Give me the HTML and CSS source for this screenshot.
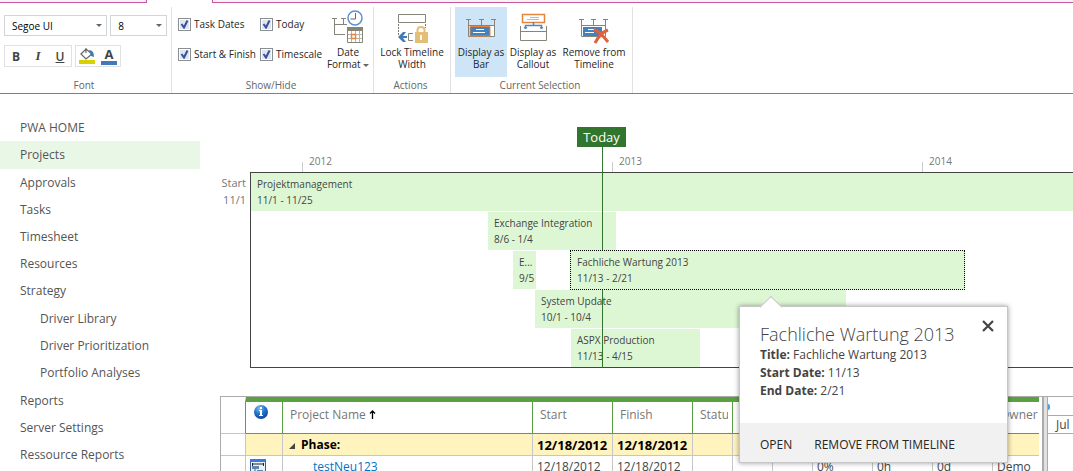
FILE: index.html
```html
<!DOCTYPE html>
<html lang="en">
<head>
<meta charset="utf-8">
<title>Project Center</title>
<link rel="stylesheet" href="styles.css">
</head>
<body>
<header>
  <div class="tabs"><span class="tab-before"></span><span class="tab-open"></span><span class="tab-after"></span></div>
  <div class="ribbon">
    <section class="group group-font">
      <div class="group-body font-tools">
        <div class="tool-row">
          <label class="combo combo-font"><select aria-label="Font"><option>Segoe UI</option></select></label>
          <label class="combo combo-size"><select aria-label="Font size"><option>8</option></select></label>
        </div>
        <div class="tool-row">
          <div class="button-set">
            <button class="tool bold">B</button><button class="tool italic">I</button><button class="tool underline">U</button>
          </div>
          <div class="button-set">
            <button class="tool" aria-label="Fill color"><svg width="18" height="18" viewBox="0 0 18 18"><path d="M3 7l5-5 6 5-6 5zM8 1v5" fill="#fff" stroke="#666" stroke-width="1.2"/><path d="M11 3q5 0 5 7l-3-1-1-3z" fill="#3c7fb5"/><path d="M1 13h16v4H1z" fill="#d8d000"/></svg></button>
            <button class="tool" aria-label="Font color"><span class="font-color">A</span></button>
          </div>
        </div>
      </div>
      <h2>Font</h2>
    </section>
    <section class="group group-show">
      <div class="group-body">
        <div class="checks">
          <label><input type="checkbox" checked>Task Dates</label>
          <label><input type="checkbox" checked>Today</label>
          <label><input type="checkbox" checked>Start &amp; Finish</label>
          <label><input type="checkbox" checked>Timescale</label>
        </div>
        <button class="big date-format">
          <svg width="34" height="34" viewBox="0 0 34 34" fill="none"><path d="M1 8.500h5M10 8.500h5M3.500 8v17M12.500 8v7M3 14.500h13M3 24.500h11" stroke="#85857a"/><circle cx="24" cy="8" r="7" fill="#fff" stroke="#5b93cf" stroke-width="1.500"/><path d="M24.500 3v6h-5" stroke="#666"/><path d="M16.500 18.500h15v14h-15z" fill="#fff" stroke="#85857a"/><path d="M16 17h16v4H16z" fill="#85857a"/><path d="M17 24.500h14M17 28.500h14M20.500 21v11M24.500 21v11M28.500 21v11" stroke="#b5b5ae"/><path d="M20.500 24.500h4v4h-4z" stroke="#e8843c" stroke-width="1.500"/></svg>
          <span>Date<br>Format <i class="caret"></i></span>
        </button>
      </div>
      <h2>Show/Hide</h2>
    </section>
    <section class="group group-actions">
      <div class="group-body">
        <button class="big">
          <svg width="34" height="34" viewBox="0 0 34 34" fill="none"><path d="M3.500 4.500h27v8h-27z" stroke="#85857a"/><path d="M3.500 14v11M30.500 14v4" stroke="#777" stroke-dasharray="2 1"/><path d="M3 27l5-5h3l-3 4h4v2H8l3 4H8z" fill="#3f7cba"/><path d="M18 23.500h-4.500v7H18" stroke="#85857a"/><path d="M22.500 23v-3q0-3 3.500-3t3.500 3v3" stroke="#e5bd76" stroke-width="2"/><path d="M20 22h13v11H20z" fill="#e5bd76"/><path d="M25 25h2v5h-2z" fill="#fff"/></svg>
          <span>Lock Timeline<br>Width</span>
        </button>
      </div>
      <h2>Actions</h2>
    </section>
    <section class="group group-selection">
      <div class="group-body">
        <button class="big selected">
          <svg width="34" height="34" viewBox="0 0 34 34" fill="none"><path d="M4.500 15.500h26v11h-26z" fill="#fff"/><path d="M2 9.500h5M15 9.500h5M27 9.500h5M4.500 9v17.500h26V9M17.500 9v7M4 15.500h27" stroke="#85857a"/><path d="M6 16.500h20v9.500H6z" fill="#4581bd" stroke="#e8843c"/><path d="M12 19.500h8M9 22.500h12" stroke="#fff"/></svg>
          <span>Display as<br>Bar</span>
        </button>
        <button class="big">
          <svg width="34" height="34" viewBox="0 0 34 34" fill="none"><path d="M6.500 4.500h22v8h-22z" stroke="#e8843c" stroke-width="1.500"/><path d="M14 7.500h9M11 9.500h12" stroke="#bbb"/><path d="M17.500 12v3M9.500 19v-3.500h16V19" stroke="#4c88c4" stroke-width="1.500"/><path d="M8 17l1.500 2 1.500-2M24 17l1.500 2 1.500-2" stroke="#4c88c4"/><path d="M4.500 16v14.500h26V16M5 21.500h25" stroke="#85857a"/></svg>
          <span>Display as<br>Callout</span>
        </button>
        <button class="big">
          <svg width="34" height="34" viewBox="0 0 34 34" fill="none"><path d="M2 9.500h5M14 9.500h5M26 9.500h5M4.500 9v17.500h24V9M16.500 9v7M4 15.500h24" stroke="#85857a"/><path d="M6 17h19v9H6z" fill="#4581bd"/><path d="M11 19.500h7M8 22.500h9" stroke="#fff"/><path d="M17 19q8 5 14 13M31 20q-8 3-13 13" stroke="#e2603c" stroke-width="3"/></svg>
          <span>Remove from<br>Timeline</span>
        </button>
      </div>
      <h2>Current Selection</h2>
    </section>
  </div>
</header>
<div class="page">
  <nav>
    <ul>
      <li><a href="#">PWA HOME</a></li>
      <li><a href="#" class="current">Projects</a></li>
      <li><a href="#">Approvals</a></li>
      <li><a href="#">Tasks</a></li>
      <li><a href="#">Timesheet</a></li>
      <li><a href="#">Resources</a></li>
      <li><a href="#">Strategy</a>
        <ul>
          <li><a href="#">Driver Library</a></li>
          <li><a href="#">Driver Prioritization</a></li>
          <li><a href="#">Portfolio Analyses</a></li>
        </ul>
      </li>
      <li><a href="#">Reports</a></li>
      <li><a href="#">Server Settings</a></li>
      <li><a href="#">Ressource Reports</a></li>
    </ul>
  </nav>
  <main>
    <section class="timeline">
      <div class="timeline-start">Start<br>11/1</div>
      <div class="timeline-body">
        <div class="years"><span>2012</span><span>2013</span><span>2014</span></div>
        <div class="today"><b>Today</b></div>
        <div class="bars">
          <div class="bar-row"><div class="bar bar-open">Projektmanagement<br>11/1 - 11/25</div></div>
          <div class="bar-row"><div class="bar" style="margin-left:237px;width:128px">Exchange Integration<br>8/6 - 1/4</div></div>
          <div class="bar-row"><div class="bar" style="margin-left:262px;width:23px">E...<br>9/5</div><div class="bar picked" style="margin-left:34px;width:395px">Fachliche Wartung 2013<br>11/13 - 2/21</div></div>
          <div class="bar-row"><div class="bar" style="margin-left:284px;width:311px">System Update<br>10/1 - 10/4</div></div>
          <div class="bar-row"><div class="bar" style="margin-left:320px;width:129px">ASPX Production<br>11/13 - 4/15</div></div>
        </div>
        <aside class="callout">
          <div class="callout-body">
            <button class="close" aria-label="Close"><svg width="12" height="12" viewBox="0 0 12 12"><path d="M1 1l10 10M11 1L1 11" stroke="#444" stroke-width="2.200"/></svg></button>
            <h3>Fachliche Wartung 2013</h3>
            <p><b>Title:</b> Fachliche Wartung 2013</p>
            <p><b>Start Date:</b> 11/13</p>
            <p><b>End Date:</b> 2/21</p>
          </div>
          <div class="callout-foot"><a href="#">OPEN</a><a href="#">REMOVE FROM TIMELINE</a></div>
        </aside>
      </div>
    </section>
    <section class="grid">
      <div class="sheet">
        <table>
          <colgroup><col class="w-row"><col class="w-info"><col><col class="w-date"><col class="w-date"><col class="w-small"><col class="w-small"><col class="w-small"><col class="w-mid"><col class="w-mid"><col class="w-mid"><col class="w-owner"></colgroup>
          <thead>
            <tr>
              <th class="row-head"></th>
              <th class="info"><svg width="16" height="16" viewBox="0 0 16 16"><defs><radialGradient id="ball" cx=".4" cy=".25" r=".8"><stop offset="0" stop-color="#7fc0f5"/><stop offset=".5" stop-color="#2374c8"/><stop offset="1" stop-color="#123f94"/></radialGradient></defs><circle cx="8" cy="8" r="7" fill="url(#ball)"/><path d="M7 3h2v2H7zM6 6h3v5h1v1H6v-1h1V7H6z" fill="#fff"/></svg></th>
              <th>Project Name <svg class="sort" width="7" height="9" viewBox="0 0 7 9"><path d="M3.500 9V1M1 3.500L3.500 1 6 3.500" fill="none" stroke="#000" stroke-width="1.300"/></svg></th>
              <th>Start</th><th>Finish</th><th><span class="clip">Status</span></th><th></th><th></th><th></th><th></th><th></th><th>Owner</th>
            </tr>
          </thead>
          <tbody>
            <tr class="phase"><td class="row-head"></td><td></td><td class="phase-name"><svg width="6" height="6" viewBox="0 0 6 6"><path d="M6 0v6H0z" fill="#444"/></svg>Phase:</td><td class="phase-date">12/18/2012</td><td class="phase-date">12/18/2012</td><td></td><td></td><td></td><td></td><td></td><td></td><td></td></tr>
            <tr><td class="row-head"></td><td class="info"><svg width="16" height="16" viewBox="0 0 16 16"><path d="M.5.500h15v15H.5z" fill="#e9f2fb" stroke="#3c5f98"/><path d="M0 0h16v3H0z" fill="#3f78d8"/><path d="M2 5h12M2.500 4v3M13.500 4v3" stroke="#222"/><path d="M2 7h7v3H2zM7 11h6v3H7z" fill="#5d86b4"/><path d="M5 10v2.500h2" fill="none" stroke="#555"/></svg></td><td class="project"><a href="#">testNeu123</a></td><td>12/18/2012</td><td>12/18/2012</td><td></td><td></td><td></td><td>0%</td><td>0h</td><td>0d</td><td>Demo</td></tr>
          </tbody>
        </table>
      </div>
      <div class="splitter"></div>
      <div class="gantt"><div class="gantt-top"><i></i></div><div class="gantt-month">Jul</div></div>
    </section>
  </main>
</div>
</body>
</html>
```
FILE: styles.css
```css
* { box-sizing: border-box; }
body {
  margin: 0;
  height: 100vh;
  overflow: hidden;
  display: flex;
  flex-direction: column;
  background: #fff;
  color: #444;
  font: 12px "Segoe UI", "Open Sans", "Noto Sans", sans-serif;
}
a { color: inherit; text-decoration: none; }
ul { list-style: none; margin: 0; padding: 0; }
button { margin: 0; padding: 0; border: 0; background: none; font: inherit; color: inherit; }

/* Ribbon */
.tabs { display: flex; height: 3px; }
.tab-before, .tab-after { background: #f4f4f4; border-bottom: 1px solid #c9569b; }
.tab-before { width: 147px; border-right: 1px solid #c9569b; }
.tab-open { width: 65px; }
.tab-after { flex: 1; border-left: 1px solid #c9569b; }
.ribbon {
  display: flex;
  padding-top: 4px;
  border-bottom: 1px solid #c9569b;
  font-size: 10px;
  color: #262626;
}
.group { border-right: 1px solid #e1e1e1; }
.group-font { width: 172px; }
.group-show { width: 202px; }
.group-actions { width: 77px; }
.group-selection { width: 182px; }
.group-body { height: 70px; display: flex; justify-content: center; }
.group h2 {
  margin: 0;
  padding-right: 3px;
  font-size: 10px;
  font-weight: 400;
  line-height: 16px;
  text-align: center;
  color: #666;
}
.font-tools { flex-direction: column; justify-content: flex-start; gap: 9px; padding: 8px 4px 0; }
.tool-row { display: flex; gap: 3px; }
.combo { position: relative; height: 21px; border: 1px solid #d2d6d8; }
.combo-font { width: 104px; }
.combo-size { width: 57px; }
.combo select {
  appearance: none;
  width: 100%;
  height: 19px;
  padding: 0 7px;
  border: 0;
  background: none;
  font: inherit;
  color: #000;
}
.combo::after, .caret {
  border: 3px solid transparent;
  border-top-color: #666;
  border-bottom: 0;
}
.combo::after { content: ""; position: absolute; right: 4px; top: 8px; }
.button-set { display: flex; height: 22px; border: 1px solid #e1e1e1; }
.tool { width: 22px; height: 20px; font-size: 12px; display: grid; place-items: center; color: #444; }
.bold { font-weight: 700; }
.italic { font: italic 700 13px "Liberation Serif", serif; }
.underline { font-weight: 600; text-decoration: underline; }
.font-color { width: 16px; border-bottom: 4px solid #4479b5; font-weight: 700; font-size: 13px; line-height: 13px; }
.group-show .group-body { justify-content: flex-start; padding-left: 6px; }
.checks {
  display: grid;
  grid-template-columns: 82px 64px;
  grid-auto-rows: 30px;
  padding-top: 2px;
}
.checks label { display: flex; align-items: center; gap: 3px; white-space: nowrap; }
.checks input {
  appearance: none;
  flex: none;
  width: 13px;
  height: 13px;
  margin: 0;
  border: 1px solid #8a8f94;
  background: #dfe6ee url("data:image/svg+xml,%3Csvg xmlns='http://www.w3.org/2000/svg' viewBox='0 0 11 11'%3E%3Cpath d='M2.500 5l2.500 3.500L8.500 1.500' fill='none' stroke='%233a4f9c' stroke-width='2'/%3E%3C/svg%3E");
  box-shadow: inset 0 0 0 1px #fff;
}
.big {
  display: flex;
  flex-direction: column;
  align-items: center;
  gap: 2px;
  padding: 3px 2px 0;
  line-height: 12px;
  white-space: nowrap;
}
.date-format { width: 48px; }
.caret { display: inline-block; vertical-align: 1px; }
.selected { background: #cde5f7; }
.group-selection .group-body { justify-content: flex-start; padding-left: 4px; }
.group-selection .big { width: 52px; }
.group-selection .big:last-child { width: 70px; }

/* Navigation */
.page { flex: 1; display: flex; min-height: 0; }
nav { width: 200px; flex: none; padding-top: 20px; color: #555; }
nav a { display: block; padding-left: 20px; line-height: 27px; }
nav .current { line-height: 28px; background: #e9f7e7; }
nav ul ul { margin: 1px 0; }
nav ul ul a { padding-left: 40px; }
main { flex: 1; min-width: 0; padding-top: 33px; }

/* Timeline */
.timeline { display: flex; font-size: 10px; }
.timeline-start {
  width: 50px;
  padding: 47px 4px 0 0;
  text-align: right;
  font-size: 11px;
  line-height: 17px;
  color: #777;
}
.timeline-body { flex: 1; min-width: 0; position: relative; }
.years {
  height: 45px;
  display: flex;
  align-items: flex-end;
  padding-left: 52px;
  overflow: hidden;
  color: #777;
}
.years span {
  flex: 0 0 310px;
  height: 16px;
  padding-left: 7px;
  line-height: 10px;
  background: linear-gradient(#ccc, #ccc) left bottom / 1px 10px no-repeat;
}
.today {
  position: absolute;
  z-index: 1;
  left: 327px;
  top: 0;
  width: 49px;
  height: 241px;
  background: linear-gradient(#31752f, #31752f) 25px 0 / 1px 100% no-repeat;
}
.today b {
  display: block;
  background: #31752f;
  color: #fff;
  font-size: 13px;
  font-weight: 400;
  line-height: 20px;
  text-align: center;
}
.bars {
  display: grid;
  grid-auto-rows: 38px;
  gap: 1px;
  border: 1px solid #444;
  border-right: 0;
}
.bar-row { display: flex; }
.bar {
  flex: none;
  padding: 3px 0 0 6px;
  line-height: 16px;
  white-space: nowrap;
  overflow: hidden;
  background: #ddf7d4;
}
.bar-open { flex: 1; }
.picked {
  position: relative;
  z-index: 2;
  margin-block: -1px;
  border: 1px dotted #000;
}

/* Callout */
.callout {
  position: absolute;
  z-index: 3;
  left: 489px;
  top: 179px;
  width: 269px;
  background: #fff;
  border: 1px solid #c6c6c6;
  box-shadow: 0 0 5px rgba(0, 0, 0, .4);
  font-size: 12px;
}
.callout::before {
  content: "";
  position: absolute;
  left: 23px;
  top: -8px;
  width: 15px;
  height: 15px;
  background: #fff;
  border: solid #c6c6c6;
  border-width: 1px 0 0 1px;
  transform: rotate(45deg);
}
.callout-body { padding: 15px 20px 23px; }
.callout h3 { margin: 0; font-size: 18px; font-weight: 300; line-height: 24px; white-space: nowrap; }
.callout p { margin: 0; line-height: 18px; }
.close { position: absolute; right: 13px; top: 13px; width: 12px; height: 12px; display: block; }
.close svg { display: block; }
.callout-foot {
  display: flex;
  gap: 22px;
  padding: 5px 20px 0;
  background: #f1f1f1;
  color: #262626;
  line-height: 34px;
  white-space: nowrap;
}

/* Project sheet */
.grid { display: flex; margin: 28px 0 0 20px; border-top: 1px solid #ababab; }
.sheet { flex: 1; min-width: 0; padding-right: 3px; border-left: 1px solid #ababab; }
table { width: 100%; table-layout: fixed; border-spacing: 0; border-collapse: separate; }
.w-row { width: 25px; }
.w-info { width: 37px; }
.w-date { width: 80px; }
.w-small { width: 40px; }
.w-mid { width: 60px; }
.w-owner { width: 46px; }
th, td { overflow: hidden; white-space: nowrap; text-align: left; padding: 0 0 0 4px; border: 0 solid #c6c6c6; }
th {
  height: 37px;
  padding: 4px 4px 0 7px;
  vertical-align: top;
  font-weight: 400;
  line-height: 17px;
  color: #777;
  border-color: #5ba142;
  border-width: 5px 1px 1px 0;
}
td { height: 22px; border-width: 0 1px 1px 0; line-height: 21px; }
th:last-child, td:last-child { border-right: 0; }
th.row-head { border-top-color: #fff; border-bottom-color: #c6c6c6; }
th.info { padding: 2px 0 0 7px; }
td.info { padding: 1px 0 0 4px; }
.info svg { display: block; }
.clip { display: block; overflow: hidden; }
.phase td { padding-top: 1px; background: #fff3be; font-weight: 700; color: #000; line-height: 20px; }
.phase .row-head { background: #fff; }
.phase .phase-name { padding-left: 6px; }
.phase .phase-date { font-size: 13px; }
.phase-name svg { margin-right: 6px; }
td.project { padding-left: 30px; color: #0072c6; }
.splitter { width: 6px; background: #e1e1e1; border: solid #ababab; border-width: 0 1px 0 2px; }
.gantt { width: 25px; }
.gantt-top { height: 19px; overflow: hidden; border-bottom: 1px solid #ababab; }
.gantt-top i { display: block; width: 2px; height: 6px; margin-top: 7px; background: #4ba0e0; border-radius: 0 2px 2px 0; }
.gantt-month { height: 18px; padding-left: 8px; border-bottom: 1px solid #ababab; line-height: 18px; overflow: hidden; }
```
